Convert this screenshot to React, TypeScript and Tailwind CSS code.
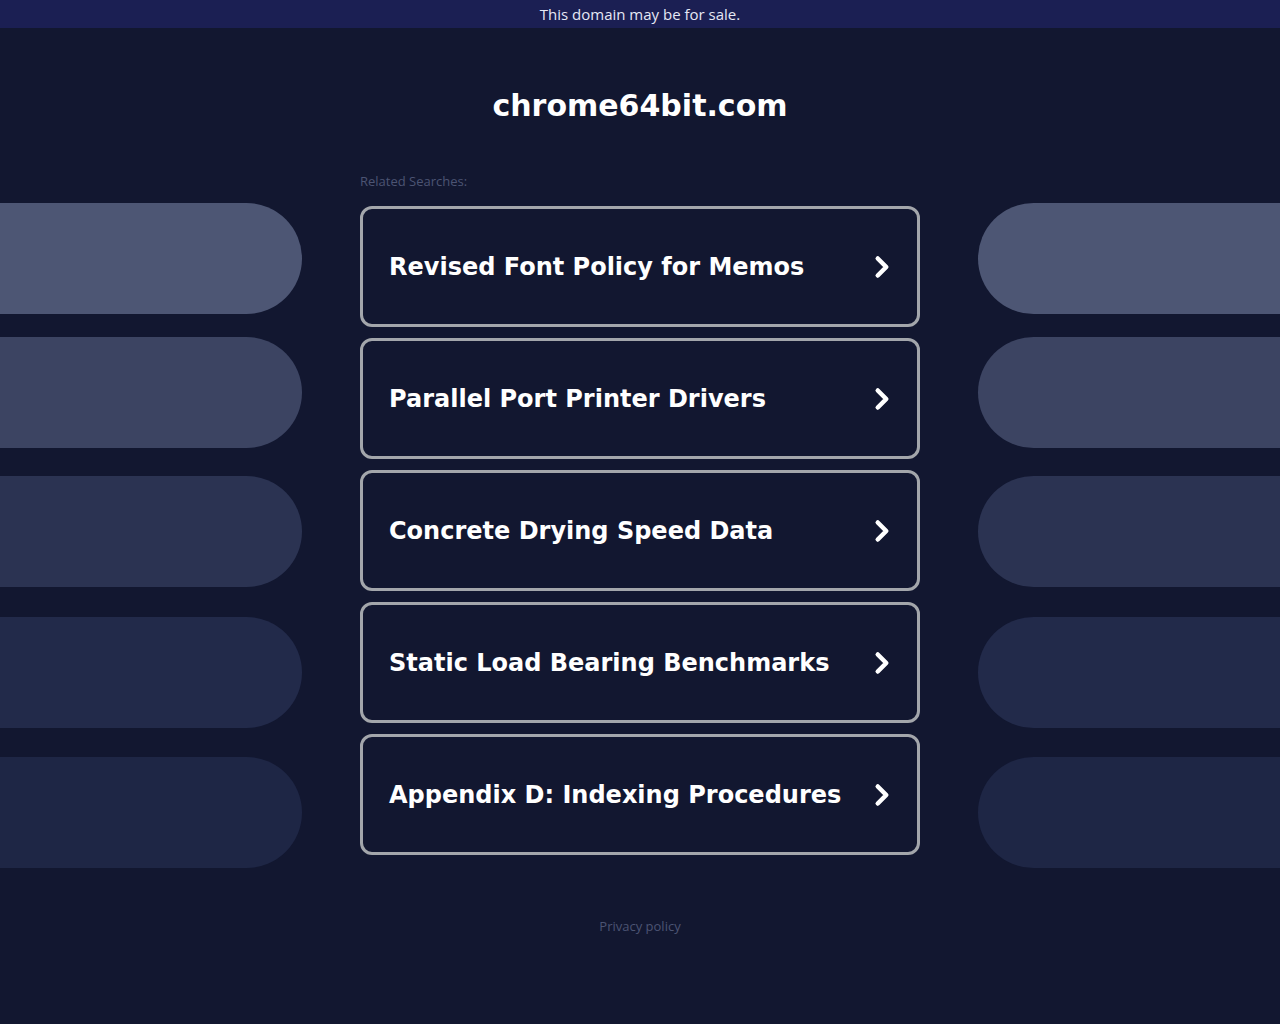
import { ChevronRight } from 'lucide-react'

const searches = [
  'Revised Font Policy for Memos',
  'Parallel Port Printer Drivers',
  'Concrete Drying Speed Data',
  'Static Load Bearing Benchmarks',
  'Appendix D: Indexing Procedures',
]

const pills = [
  { color: 'bg-[#4d5674]', top: 'mt-[203px]' },
  { color: 'bg-[#3c4462]', top: 'mt-[23px]' },
  { color: 'bg-[#2b3352]', top: 'mt-[28px]' },
  { color: 'bg-[#222a4a]', top: 'mt-[30px]' },
  { color: 'bg-[#1e2645]', top: 'mt-[29px]' },
]

function SidePills({ side }: { side: 'left' | 'right' }) {
  return (
    <div className="flex w-[302px] flex-col">
      {pills.map((pill) => (
        <div
          className={`${pill.top} h-[111px] w-[302px] ${pill.color} ${
            side === 'left' ? 'rounded-r-full' : 'rounded-l-full'
          }`}
          key={pill.color}
        />
      ))}
    </div>
  )
}

export default function App() {
  return (
    <div className="min-h-[1024px] bg-[#121730] font-['DejaVu_Sans',sans-serif]">
      <div className="flex h-[28px] items-center justify-center bg-[#1b1f53] font-['Open_Sans',sans-serif] text-[15px] text-[#e6e8f5]">
        This domain may be for sale.
      </div>
      <div className="flex justify-between">
        <div className="-mt-[28px]">
          <SidePills side="left" />
        </div>
        <div className="flex w-[560px] flex-col">
          <h1 className="mt-[59px] text-center text-[30px] font-bold leading-[38px] text-white">chrome64bit.com</h1>
          <p className="mt-[47px] font-['Open_Sans',sans-serif] text-[13px] leading-[18px] text-[#4c5473]">
            Related Searches:
          </p>
          <div className="mt-[16px] flex flex-col gap-[11px]">
            {searches.map((item) => (
              <a
                className="flex h-[121px] items-center justify-between rounded-[12px] border-[3px] border-[#a3a6ab] pl-[26px] pr-[18px] text-[24px] font-bold text-white"
                href="#"
                key={item}
              >
                <span>{item}</span>
                <ChevronRight className="size-[34px] text-white" strokeWidth={3.2} aria-hidden />
              </a>
            ))}
          </div>
          <p className="mt-[62px] text-center font-['Open_Sans',sans-serif] text-[13px] text-[#4c5473]">Privacy policy</p>
        </div>
        <div className="-mt-[28px]">
          <SidePills side="right" />
        </div>
      </div>
    </div>
  )
}
